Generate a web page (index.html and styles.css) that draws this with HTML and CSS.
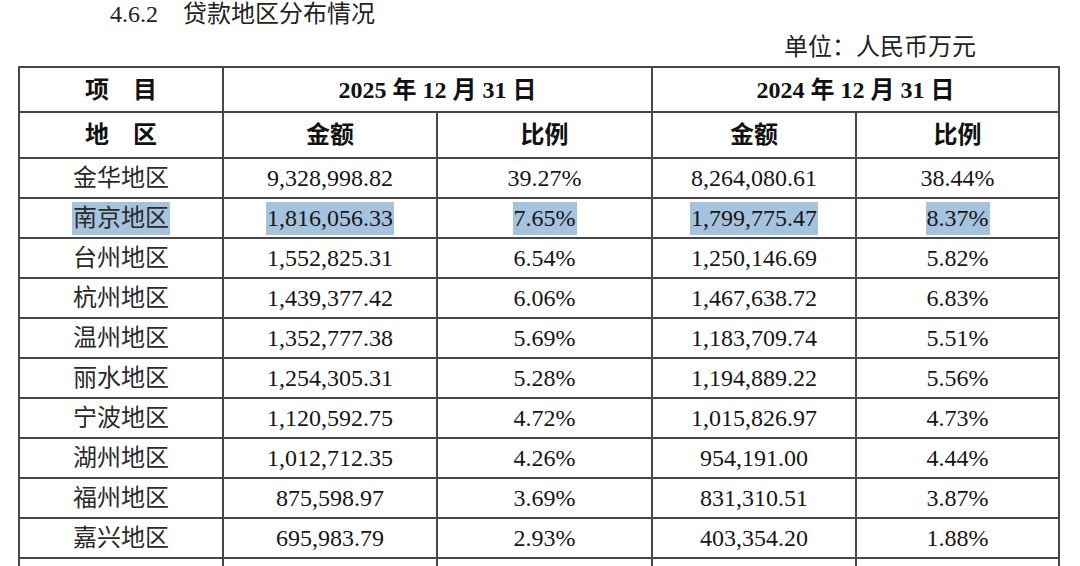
FILE: index.html
```html
<!DOCTYPE html>
<html lang="zh-CN">
<head>
<meta charset="utf-8">
<link rel="stylesheet" href="styles.css">
</head>
<body>
<div class="page">
  <div class="title"><span class="num">4.6.2</span>贷款地区分布情况</div>
  <div class="unit">单位：人民币万元</div>
  <table class="grid">
    <colgroup>
      <col class="c1"><col class="c2"><col class="c3"><col class="c4"><col class="c5">
    </colgroup>
    <tr class="h1">
      <th>项　目</th>
      <th colspan="2">2025 年 12 月 31 日</th>
      <th colspan="2">2024 年 12 月 31 日</th>
    </tr>
    <tr class="h2">
      <th>地　区</th>
      <th>金额</th>
      <th>比例</th>
      <th>金额</th>
      <th>比例</th>
    </tr>
    <tr><td class="zh">金华地区</td><td>9,328,998.82</td><td>39.27%</td><td>8,264,080.61</td><td>38.44%</td></tr>
    <tr><td class="zh"><span class="sel">南京地区</span></td><td><span class="sel">1,816,056.33</span></td><td><span class="sel">7.65%</span></td><td><span class="sel">1,799,775.47</span></td><td><span class="sel">8.37%</span></td></tr>
    <tr><td class="zh">台州地区</td><td>1,552,825.31</td><td>6.54%</td><td>1,250,146.69</td><td>5.82%</td></tr>
    <tr><td class="zh">杭州地区</td><td>1,439,377.42</td><td>6.06%</td><td>1,467,638.72</td><td>6.83%</td></tr>
    <tr><td class="zh">温州地区</td><td>1,352,777.38</td><td>5.69%</td><td>1,183,709.74</td><td>5.51%</td></tr>
    <tr><td class="zh">丽水地区</td><td>1,254,305.31</td><td>5.28%</td><td>1,194,889.22</td><td>5.56%</td></tr>
    <tr><td class="zh">宁波地区</td><td>1,120,592.75</td><td>4.72%</td><td>1,015,826.97</td><td>4.73%</td></tr>
    <tr><td class="zh">湖州地区</td><td>1,012,712.35</td><td>4.26%</td><td>954,191.00</td><td>4.44%</td></tr>
    <tr><td class="zh">福州地区</td><td>875,598.97</td><td>3.69%</td><td>831,310.51</td><td>3.87%</td></tr>
    <tr><td class="zh">嘉兴地区</td><td>695,983.79</td><td>2.93%</td><td>403,354.20</td><td>1.88%</td></tr>
    <tr><td class="zh"></td><td></td><td></td><td></td><td></td></tr>
  </table>
</div>
</body>
</html>
```

FILE: styles.css
```css
html, body {
  margin: 0;
  padding: 0;
  overflow: hidden;
  background: #ffffff;
}

body {
  font-family: "Liberation Serif", "Noto Sans CJK SC", serif;
  font-size: 24px;
  color: #1a1a1a;
}

.page {
  padding-left: 18px;
  width: 1040px;
}

.title {
  height: 28px;
  line-height: 28px;
  padding-left: 92px;
  color: #222;
  white-space: nowrap;
}

.title .num {
  margin-right: 25px;
}

.unit {
  height: 38px;
  line-height: 38px;
  text-align: right;
  padding-right: 82px;
  color: #222;
}

.grid {
  border-collapse: collapse;
  table-layout: fixed;
  width: 1040px;
}

.c1 { width: 204px; }
.c2 { width: 214px; }
.c3 { width: 215px; }
.c4 { width: 204px; }
.c5 { width: 203px; }

.grid th,
.grid td {
  border: 2px solid #474747;
  padding: 0;
  text-align: center;
  vertical-align: middle;
  white-space: nowrap;
  line-height: 28px;
  overflow: hidden;
}

.grid th {
  font-weight: bold;
  color: #111;
}

.h1 th { height: 43px; }
.h2 th { height: 44px; }

.grid td {
  height: 38px;
  color: #161616;
}

.grid td.zh {
  color: #2a2a2a;
}

.sel {
  display: inline-block;
  background: #a5c3dd;
  line-height: 33px;
  height: 33px;
  padding: 0 1px;
}
```
